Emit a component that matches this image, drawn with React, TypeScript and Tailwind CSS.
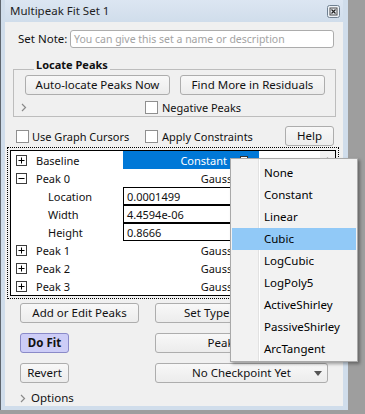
import React from 'react';

const Btn = ({ children, className = '' }: { children?: React.ReactNode; className?: string }) => (
  <div
    className={`h-[20px] flex items-center justify-center rounded-[3px] border border-[#adadad] bg-linear-to-b from-[#f8f8f8] to-[#ececec] text-[11.5px] ${className}`}
  >
    {children}
  </div>
);

const Check = () => <span className="w-[13px] h-[13px] flex-none border border-[#8f8f8f] bg-white" />;

const Expander = ({ open }: { open?: boolean }) => (
  <svg width="11" height="11" viewBox="0 0 11 11" className="flex-none">
    <rect x="0.5" y="0.5" width="10" height="10" fill="white" stroke="#3c3c3c" />
    <path d="M2.5 5.5h6" stroke="#000" />
    {!open && <path d="M5.5 2.5v6" stroke="#000" />}
  </svg>
);

const Chevron = () => (
  <svg width="6" height="9" viewBox="0 0 6 9" className="flex-none">
    <path d="M1 1l3.5 3.5L1 8" fill="none" stroke="#8a8a8a" strokeWidth="1.2" />
  </svg>
);

const menuItems = ['None', 'Constant', 'Linear', 'Cubic', 'LogCubic', 'LogPoly5', 'ActiveShirley', 'PassiveShirley', 'ArcTangent'];

const PeakRow = ({ name }: { name: string }) => (
  <div className="h-[18px] flex items-center">
    <div className="w-[112px] flex items-center pl-[5px]">
      <Expander />
      <span className="ml-[9px]">{name}</span>
    </div>
    <div className="w-[136px] flex justify-end pr-[11px]">Gaussian</div>
    <div className="flex-1" />
  </div>
);

const ValueRow = ({ label, value }: { label: string; value: string }) => (
  <div className="h-[18px] flex items-center">
    <div className="w-[112px] pl-[37px]">{label}</div>
    <div className="w-[136px] h-[18px] border border-black flex items-center pl-[3px]">{value}</div>
    <div className="flex-1" />
  </div>
);

export default function App() {
  return (
    <div className="w-[365px] h-[414px] bg-[#9e9e9e] relative overflow-hidden font-['Noto_Sans',sans-serif] text-[11px] leading-none text-[#111]">
      {/* window */}
      <div className="w-[348px] h-[410px] bg-[#d0ddeb] border-l border-[#5f666e] flex flex-col pl-[4px] pr-[5px] pb-[4px]">
        {/* title bar */}
        <div className="h-[22px] flex-none flex items-center justify-between pl-[5px] pr-[3px] bg-linear-to-b from-[#dce6f2] to-[#d0ddeb]">
          <span className="text-[11.5px] text-[#1e1e1e]">Multipeak Fit Set 1</span>
          <svg width="13" height="13" viewBox="0 0 13 13">
            <rect x="0.5" y="0.5" width="12" height="12" rx="2" fill="#eef3f8" stroke="#6f8091" />
            <rect x="3" y="3" width="7" height="7" fill="none" stroke="#4a4a4a" />
            <path d="M4.5 4.5l4 4M8.5 4.5l-4 4" stroke="#222" strokeWidth="1.2" />
          </svg>
        </div>

        {/* content */}
        <div className="flex-1 bg-[#f0f0f0] flex flex-col">
          {/* set note */}
          <div className="mt-[8px] h-[18px] flex items-center pl-[13px] pr-[9px]">
            <span className="text-[11.5px]">Set Note:</span>
            <div className="ml-auto w-[264px] h-[18px] rounded-[3px] border border-[#acacac] bg-white flex items-center pl-[3px] text-[10.5px] text-[#a3a3a3]">
              You can give this set a name or description
            </div>
          </div>

          {/* locate peaks group */}
          <div className="relative mt-[21px] ml-[8px] mr-[7px] h-[48px] border border-[#bdbdbd] flex flex-col pt-[5px]">
            <span className="absolute left-[20px] top-[-12px] px-[2px] bg-[#f0f0f0] font-bold leading-[14px]">Locate Peaks</span>
            <div className="flex pl-[11px] gap-[10px]">
              <Btn className="w-[145px]">Auto-locate Peaks Now</Btn>
              <Btn className="w-[145px]">Find More in Residuals</Btn>
            </div>
            <div className="mt-[6px] h-[13px] flex items-center pl-[7px]">
              <Chevron />
              <div className="ml-[118px] flex items-center gap-[4px]">
                <Check />
                <span>Negative Peaks</span>
              </div>
            </div>
          </div>

          {/* options row */}
          <div className="mt-[9px] h-[20px] flex items-center pl-[11px] pr-[9px]">
            <div className="w-[129px] flex items-center gap-[3px]">
              <Check />
              <span>Use Graph Cursors</span>
            </div>
            <div className="flex items-center gap-[4px]">
              <Check />
              <span>Apply Constraints</span>
            </div>
            <Btn className="ml-auto w-[49px]">Help</Btn>
          </div>

          {/* list */}
          <div className="mt-[1px] ml-[2px] w-[332px] border border-dotted border-black p-[2px]">
            <div className="border border-black bg-white flex">
              <div className="flex-1 flex flex-col">
                <div className="h-[18px] flex items-center">
                  <div className="w-[112px] flex items-center pl-[5px]">
                    <Expander />
                    <span className="ml-[9px]">Baseline</span>
                  </div>
                  <div className="w-[136px] h-[18px] bg-[#0078d7] text-white flex items-center justify-end pr-[11px]">
                    <span>Constant</span>
                    <span className="ml-[13px] w-[8px] h-[8px] border border-[#333] bg-white" />
                  </div>
                  <div className="flex-1" />
                </div>
                <div className="h-[18px] flex items-center">
                  <div className="w-[112px] flex items-center pl-[5px]">
                    <Expander open />
                    <span className="ml-[9px]">Peak 0</span>
                  </div>
                  <div className="w-[136px] flex justify-end pr-[11px]">Gaussian</div>
                  <div className="flex-1" />
                </div>
                <ValueRow label="Location" value="0.0001499" />
                <ValueRow label="Width" value="4.4594e-06" />
                <ValueRow label="Height" value="0.8666" />
                <PeakRow name="Peak 1" />
                <PeakRow name="Peak 2" />
                <PeakRow name="Peak 3" />
              </div>
              <div className="w-[15px] bg-[#f0f0f0] flex justify-center pt-[6px]">
                <svg width="7" height="4" viewBox="0 0 7 4">
                  <path d="M0 4L3.5 0L7 4z" fill="#a3a3a3" />
                </svg>
              </div>
            </div>
          </div>

          {/* buttons */}
          <div className="mt-[4px] flex pl-[15px] gap-[16px]">
            <Btn className="w-[119px]">Add or Edit Peaks</Btn>
            <Btn className="w-[173px]">Set Type for All Peaks</Btn>
          </div>
          <div className="mt-[10px] flex pl-[15px] gap-[16px]">
            <div className="w-[49px] h-[20px] flex items-center justify-center rounded-[3px] border border-[#8a8ac8] bg-[#cdcdf7] text-[11.5px] font-bold">
              Do Fit
            </div>
            <Btn className="ml-[70px] w-[173px]">Peak Results</Btn>
          </div>
          <div className="mt-[10px] flex pl-[15px] gap-[16px]">
            <Btn className="w-[49px]">Revert</Btn>
            <Btn className="ml-[70px] w-[173px] relative">
              <span>No Checkpoint Yet</span>
              <svg width="8" height="5" viewBox="0 0 8 5" className="absolute right-[5px] top-[7px]">
                <path d="M0 0h8L4 5z" fill="#555" />
              </svg>
            </Btn>
          </div>
          <div className="mt-[7px] h-[16px] flex items-center pl-[15px] gap-[5px]">
            <Chevron />
            <span className="text-[11.5px]">Options</span>
          </div>
        </div>
      </div>

      {/* popup menu */}
      <div className="absolute left-[230px] top-[158px] w-[128px] border border-[#a9a9a9] bg-[#f2f2f2] shadow-[2px_2px_3px_rgba(0,0,0,0.35)] pt-[3px] pb-[1px] px-[1px] text-[11.5px]">
        <div className="absolute left-[27px] top-0 bottom-0 w-[1px] bg-[#e2e2e2]" />
        <div className="absolute left-[28px] top-0 bottom-0 w-[1px] bg-white" />
        {menuItems.map((item) => (
          <div
            key={item}
            className={`relative h-[22px] flex items-center pl-[32px] text-black ${item === 'Cubic' ? 'bg-[#91c9f7]' : ''}`}
          >
            {item}
          </div>
        ))}
      </div>
    </div>
  );
}
